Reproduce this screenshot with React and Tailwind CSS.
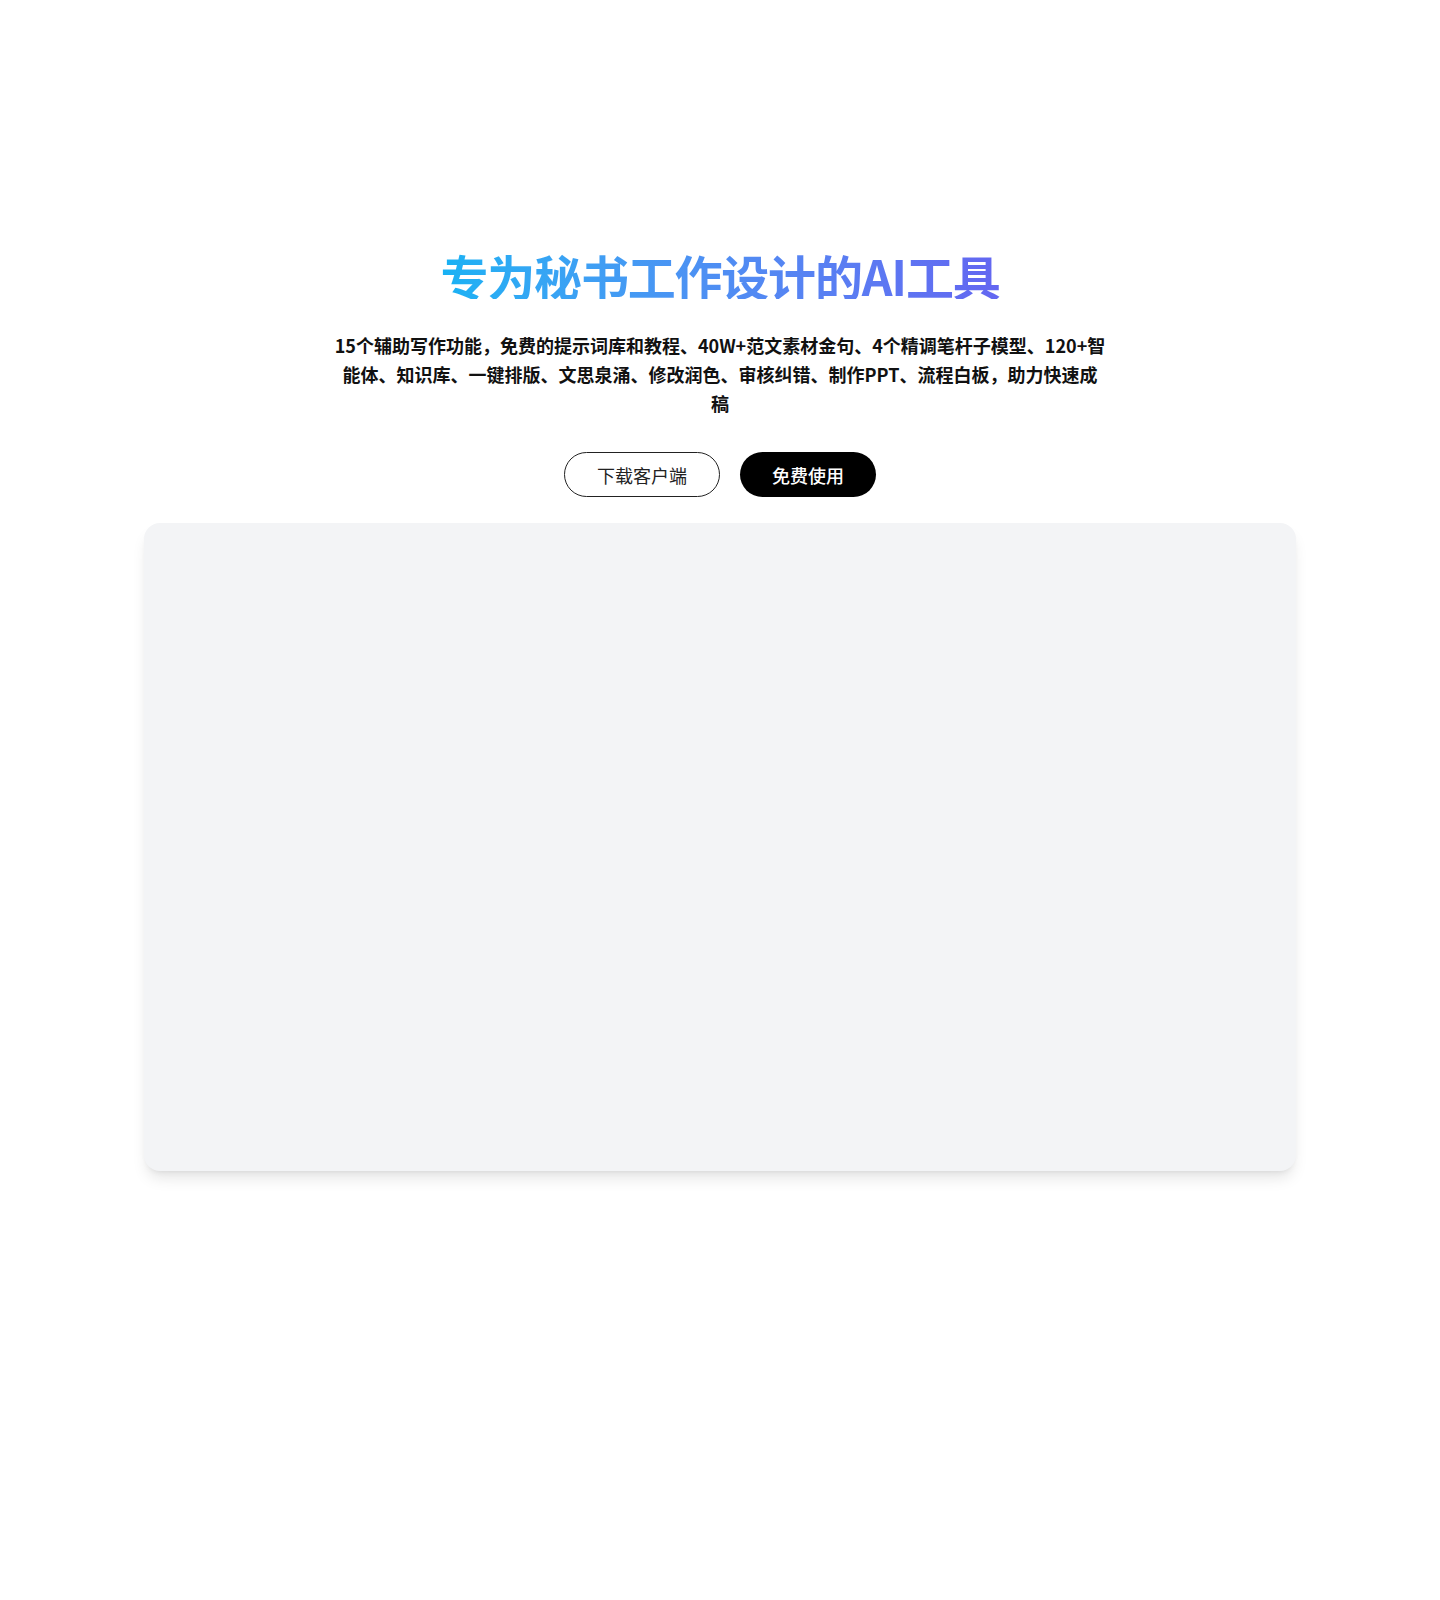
import React from 'react';

const App = () => {
  return (
    <div className="min-h-[1600px] bg-white font-['Noto_Sans_CJK_SC','Noto_Sans',sans-serif]">
      <section className="flex flex-col items-center pt-[251px] px-6">
        {/* Hero title */}
        <h1 className="text-[48px] leading-none font-bold tracking-tight bg-gradient-to-r from-[#16b2f4] to-[#6366f1] bg-clip-text text-transparent">
          专为秘书工作设计的AI工具
        </h1>

        <p className="mt-8 max-w-[772px] text-center text-lg leading-[1.6] font-bold text-[#111]">
          15个辅助写作功能，免费的提示词库和教程、40W+范文素材金句、4个精调笔杆子模型、120+智能体、知识库、一键排版、文思泉涌、修改润色、审核纠错、制作PPT、流程白板，助力快速成稿
        </p>

        <div className="mt-[35px] flex items-center gap-5">
          <button className="h-[45px] px-8 rounded-full border border-[#222] bg-white text-lg text-[#222]">
            下载客户端
          </button>
          <button className="h-[45px] px-8 rounded-full bg-black text-lg font-medium text-white">
            免费使用
          </button>
        </div>

        {/* Preview area */}
        <div className="mt-[26px] w-full max-w-6xl aspect-video rounded-2xl bg-[#f3f4f6] shadow-lg"></div>
      </section>
    </div>
  );
};

export default App;
